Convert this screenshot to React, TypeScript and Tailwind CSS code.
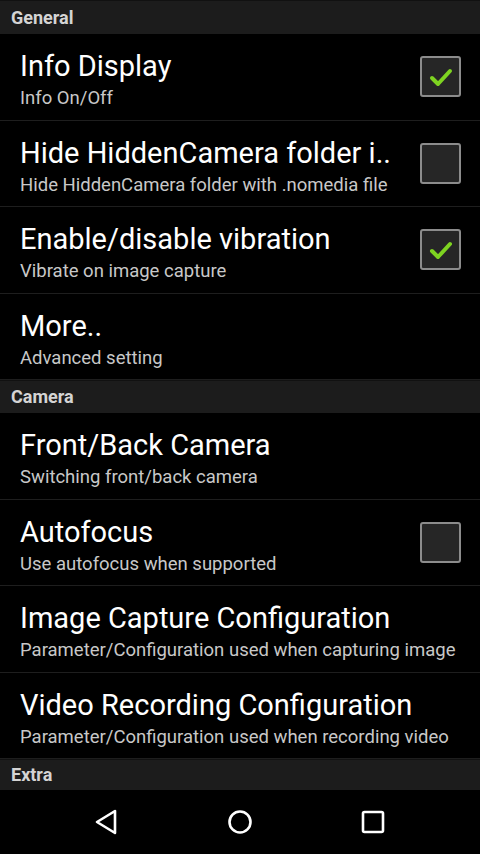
import React from "react";

type Row = { title: string; sub: string; check?: boolean | null };

const general: Row[] = [
  { title: "Info Display", sub: "Info On/Off", check: true },
  { title: "Hide HiddenCamera folder i..", sub: "Hide HiddenCamera folder with .nomedia file", check: false },
  { title: "Enable/disable vibration", sub: "Vibrate on image capture", check: true },
  { title: "More..", sub: "Advanced setting", check: null },
];

const camera: Row[] = [
  { title: "Front/Back Camera", sub: "Switching front/back camera", check: null },
  { title: "Autofocus", sub: "Use autofocus when supported", check: false },
  { title: "Image Capture Configuration", sub: "Parameter/Configuration used when capturing image", check: null },
  { title: "Video Recording Configuration", sub: "Parameter/Configuration used when recording video", check: null },
];

function Header({ label, h }: { label: string; h: string }) {
  return (
    <div className={`${h} bg-[#1c1c1c] border-t border-[#111] flex items-center pl-[11px]`}>
      <span className="text-[18px] font-bold text-[#d4d4d4] leading-none">{label}</span>
    </div>
  );
}

function Checkbox({ checked }: { checked: boolean }) {
  return (
    <div className="w-[41px] h-[41px] rounded-[3px] border-2 border-[#8c8c8c] bg-[#262626] flex items-center justify-center">
      {checked && (
        <svg width="28" height="28" viewBox="0 0 28 28">
          <path d="M5 15 L11 21 L23 8" fill="none" stroke="#7ed321" strokeWidth="4" strokeLinecap="round" strokeLinejoin="round" />
        </svg>
      )}
    </div>
  );
}

function Item({ row }: { row: Row }) {
  return (
    <div className="h-[86.5px] shrink-0 border-b border-[#1e1e1e] flex items-center pl-[20px] pr-[19px]">
      <div className="flex-1 min-w-0 flex flex-col pt-[6px]">
        <div className="text-[29px] text-white leading-[34px] whitespace-nowrap">{row.title}</div>
        <div className="mt-[3px] text-[18.5px] text-[#c8c8c8] leading-[24px] whitespace-nowrap">{row.sub}</div>
      </div>
      {row.check !== null && row.check !== undefined && <Checkbox checked={row.check} />}
    </div>
  );
}

export default function App() {
  return (
    <div className="w-[480px] h-[854px] bg-black flex flex-col overflow-hidden" style={{ fontFamily: "Roboto, 'Noto Sans', sans-serif" }}>
      <Header label="General" h="h-[34px]" />
      {general.map((r) => (
        <Item key={r.title} row={r} />
      ))}
      <Header label="Camera" h="h-[33px]" />
      {camera.map((r) => (
        <Item key={r.title} row={r} />
      ))}
      <Header label="Extra" h="h-[31px]" />
      <div className="flex-1 bg-black flex items-center justify-between px-[94px]">
        <svg width="26" height="28" viewBox="0 0 26 28">
          <path d="M21 3 L21 25 L3 14 Z" fill="none" stroke="#fff" strokeWidth="2.6" strokeLinejoin="round" />
        </svg>
        <svg width="26" height="26" viewBox="0 0 26 26">
          <circle cx="13" cy="13" r="10.5" fill="none" stroke="#fff" strokeWidth="2.6" />
        </svg>
        <svg width="26" height="26" viewBox="0 0 26 26">
          <rect x="3" y="3" width="20" height="20" rx="1.5" fill="none" stroke="#fff" strokeWidth="2.6" />
        </svg>
      </div>
    </div>
  );
}
